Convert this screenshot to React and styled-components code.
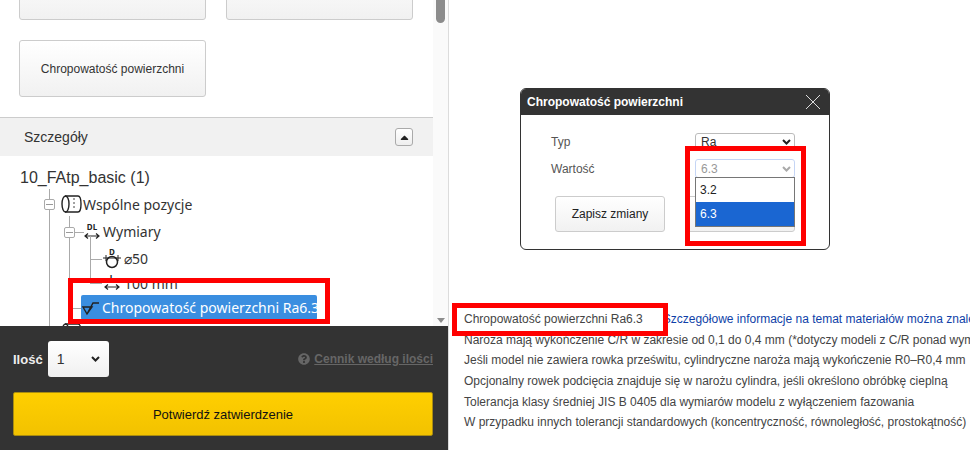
import React from "react";
import styled, { createGlobalStyle } from "styled-components";
import { FaQuestionCircle, FaCaretUp } from "react-icons/fa";

const GlobalStyle = createGlobalStyle`
  html, body {
    margin: 0;
    padding: 0;
    background: #fff;
    font-family: "Liberation Sans", Arial, sans-serif;
    color: #333;
  }
`;

const Page = styled.div`
  position: relative;
  display: flex;
  width: 970px;
  height: 450px;
  overflow: hidden;
`;

// Left column
const Side = styled.aside`
  display: flex;
  flex-direction: column;
  flex: none;
  width: 448px;
  height: 450px;
  border-right: 1px solid #dcdcdc;
`;

const SideScroll = styled.div`
  display: flex;
  flex: none;
  height: 326px;
  overflow: hidden;
`;

const SideBody = styled.div`
  flex: none;
  width: 433px;
`;

const Scrollbar = styled.div`
  display: flex;
  flex-direction: column;
  justify-content: space-between;
  align-items: center;
  flex: none;
  width: 15px;
  padding-bottom: 3px;
  box-sizing: border-box;
  background: #fafafa;
`;

const Thumb = styled.div`
  width: 9px;
  height: 23px;
  border-radius: 0 0 5px 5px;
  background: #8c8c8c;
`;

const ScrollArrow = styled.div`
  width: 0;
  height: 0;
  border-left: 4px solid transparent;
  border-right: 4px solid transparent;
  border-top: 5px solid #8c8c8c;
`;

const ButtonGrid = styled.div`
  display: grid;
  grid-template-columns: 187px 187px;
  grid-auto-rows: 57px;
  gap: 20px;
  margin-top: -37px;
  padding-left: 19px;
`;

const OptionButton = styled.div`
  display: flex;
  align-items: center;
  justify-content: center;
  box-sizing: border-box;
  border: 1px solid #ccc;
  border-radius: 3px;
  background: linear-gradient(#fff, #f1f1f1);
  font-size: 12px;
  color: #333;
`;

const DetailHeader = styled.div`
  display: flex;
  align-items: center;
  justify-content: space-between;
  box-sizing: border-box;
  height: 39px;
  margin-top: 20px;
  padding: 0 20px 0 24px;
  border-top: 1px solid #ccc;
  background: #f1f1f1;
  font-size: 14px;
  color: #333;
`;

const CollapseButton = styled.div`
  display: flex;
  align-items: center;
  justify-content: center;
  box-sizing: border-box;
  width: 18px;
  height: 18px;
  border: 1px solid #aaa;
  border-radius: 3px;
  background: linear-gradient(#fff, #eee);
  color: #222;
  font-size: 13px;
`;

const Tree = styled.div`
  position: relative;
  padding-top: 12px;
  font-family: "Noto Sans", sans-serif;
  font-size: 14px;
  color: #333;
`;

const TreeRoot = styled.div`
  height: 21px;
  padding-left: 20px;
  font-family: "Liberation Sans", Arial, sans-serif;
  font-size: 16px;
  line-height: 20px;
  color: #333;
`;

const Guide = styled.div`
  position: relative;
  padding-top: 3px;

  &::before {
    content: "";
    position: absolute;
    left: ${(p) => p.$x}px;
    top: ${(p) => p.$top}px;
    height: ${(p) => p.$len}px;
    width: 1px;
    background: #aaa;
  }
`;

const TreeRow = styled.div`
  position: relative;
  display: flex;
  align-items: center;
  gap: ${(p) => p.$gap ?? 1}px;
  height: 24.4px;
  padding-left: ${(p) => p.$indent}px;
  white-space: nowrap;

  &::before {
    content: "";
    display: ${(p) => (p.$stub ? "block" : "none")};
    position: absolute;
    left: ${(p) => p.$stubX}px;
    top: 50%;
    width: ${(p) => p.$stub}px;
    height: 1px;
    background: #aaa;
  }
`;

const Toggle = styled.span`
  position: absolute;
  left: ${(p) => p.$x}px;
  top: 50%;
  display: flex;
  align-items: center;
  justify-content: center;
  box-sizing: border-box;
  width: 11px;
  height: 11px;
  margin-top: -5px;
  border: 1px solid #aaa;
  border-radius: 2px;
  background: #fff;

  &::after {
    content: "";
    width: 7px;
    height: 1px;
    background: #999;
  }
`;

const SelectedLabel = styled.span`
  display: flex;
  align-items: center;
  gap: 3px;
  box-sizing: border-box;
  width: 236px;
  height: 25px;
  padding-left: 1px;
  border-radius: 2px;
  background: #3a8ee0;
  color: #fff;
  overflow: hidden;
`;

const IconSvg = styled.svg`
  display: block;
  flex: none;
  overflow: visible;

  text {
    font-family: "Noto Sans", sans-serif;
    font-weight: 700;
    font-size: 8px;
    fill: #222;
    text-anchor: middle;
  }
`;

const CylinderIcon = () => (
  <IconSvg width="21" height="18" viewBox="0 0 21 18">
    <path d="M4 1h13c2 0 3 4 3 8s-1 8-3 8H4" fill="none" stroke="#222" strokeWidth="1.4" />
    <ellipse cx="4.5" cy="9" rx="3.5" ry="8" fill="none" stroke="#222" strokeWidth="1.4" />
    <path d="M13 3v12" stroke="#444" strokeWidth="1" strokeDasharray="2 2" />
  </IconSvg>
);

const LengthIcon = ({ label, width = 16 }) => (
  <IconSvg width={width} height="20" viewBox={`0 0 ${width} 20`}>
    <text x={width / 2} y="8">{label}</text>
    <path
      d={`M1 14h${width - 2}M4 11.5L1 14l3 2.5M${width - 4} 11.5l3 2.5-3 2.5`}
      fill="none"
      stroke="#222"
      strokeWidth="1.2"
    />
  </IconSvg>
);

const DiameterIcon = () => (
  <IconSvg width="18" height="20" viewBox="0 0 18 20">
    <text x="9" y="6">D</text>
    <path d="M0 9h18M3 6v6M15 6v6" fill="none" stroke="#222" strokeWidth="1" />
    <circle cx="9" cy="13" r="5.5" fill="none" stroke="#222" strokeWidth="1.5" />
  </IconSvg>
);

const RoughnessIcon = () => (
  <IconSvg width="17" height="14" viewBox="0 0 17 14">
    <path d="M1 6h9L5 13 1 6zM5 13L11 2h6" fill="none" stroke="#222" strokeWidth="1.4" />
  </IconSvg>
);

// Bottom bar of the left column
const OrderBar = styled.div`
  flex: none;
  box-sizing: border-box;
  height: 124px;
  padding: 15px 15px 0 13px;
  background: #333;
`;

const QuantityRow = styled.div`
  display: flex;
  align-items: center;
  height: 36px;
`;

const QuantityLabel = styled.span`
  margin-right: 5px;
  font-size: 13px;
  font-weight: 700;
  color: #eee;
`;

const QuantitySelect = styled.div`
  display: flex;
  align-items: center;
  justify-content: space-between;
  box-sizing: border-box;
  width: 61px;
  height: 36px;
  padding: 0 9px;
  border-radius: 3px;
  background: linear-gradient(#fff, #f0f0f0);
  font-size: 14px;
  color: #333;
`;

const PriceLink = styled.a`
  display: flex;
  align-items: center;
  gap: 4px;
  margin-left: auto;
  font-size: 12px;
  font-weight: 700;
  color: #666;

  span {
    text-decoration: underline;
  }
`;

const ConfirmButton = styled.div`
  display: flex;
  align-items: center;
  justify-content: center;
  box-sizing: border-box;
  height: 44px;
  margin-top: 15px;
  border: 1px solid #a98c10;
  border-radius: 2px;
  background: linear-gradient(#ffcf00, #f2c200);
  font-size: 13px;
  color: #111;
`;

const Chevron = ({ color = "#222" }) => (
  <IconSvg width="9" height="6" viewBox="0 0 9 6">
    <path d="M1 1l3.5 3.5L8 1" fill="none" stroke={color} strokeWidth="2" />
  </IconSvg>
);

// Right column
const Main = styled.main`
  flex: 1;
  min-width: 0;
  box-sizing: border-box;
  padding: 309px 0 0 15px;
  overflow: hidden;
`;

const InfoLine = styled.div`
  display: flex;
  gap: 20px;
  height: 20.7px;
  font-size: 12px;
  line-height: 20.7px;
  color: #444;
  white-space: nowrap;
`;

const InfoLink = styled.a`
  color: #0f3fa8;
`;

// Dialog
const Dialog = styled.div`
  position: absolute;
  left: 520px;
  top: 88px;
  box-sizing: border-box;
  width: 310px;
  height: 162px;
  border: 1px solid #333;
  border-radius: 6px;
  background: #fff;
  overflow: hidden;
`;

const DialogTitle = styled.div`
  display: flex;
  align-items: center;
  justify-content: space-between;
  box-sizing: border-box;
  height: 26px;
  padding: 0 8px 0 6px;
  background: #333;
  font-size: 12px;
  font-weight: 700;
  color: #fff;
`;

const DialogBody = styled.div`
  display: grid;
  grid-template-columns: 144px 100px;
  grid-auto-rows: 27px;
  align-items: center;
  padding: 13px 0 0 30px;
  font-size: 12px;
  color: #555;
`;

const DialogSelect = styled.div`
  display: flex;
  align-items: center;
  justify-content: space-between;
  box-sizing: border-box;
  height: ${(p) => (p.$open ? 19 : 17)}px;
  padding: 0 3px 0 5px;
  border: 1px solid ${(p) => (p.$open ? "#c5d5f5" : "#bbb")};
  border-radius: 3px;
  font-size: 12px;
  color: ${(p) => (p.$open ? "#999" : "#333")};
`;

const DialogButtons = styled.div`
  display: flex;
  justify-content: space-between;
  margin: 14px 0 0 34px;
  width: 240px;
`;

const DialogButton = styled.div`
  display: flex;
  align-items: center;
  justify-content: center;
  box-sizing: border-box;
  width: 110px;
  height: 36px;
  border: 1px solid #ccc;
  border-radius: 3px;
  background: linear-gradient(#fff, #f1f1f1);
  font-size: 12px;
  color: #222;
`;

const DropdownList = styled.div`
  position: absolute;
  left: 695px;
  top: 177px;
  box-sizing: border-box;
  width: 100px;
  height: 50px;
  border: 1px solid #767676;
  background: #fff;
  font-size: 12px;
`;

const DropdownOption = styled.div`
  display: flex;
  align-items: center;
  height: 24px;
  padding-left: 4px;
  background: ${(p) => (p.$active ? "#1a66d2" : "#fff")};
  color: ${(p) => (p.$active ? "#fff" : "#222")};
`;

// Red annotation frames drawn over the screenshot
const Highlight = styled.div`
  position: absolute;
  left: ${(p) => p.$x}px;
  top: ${(p) => p.$y}px;
  box-sizing: border-box;
  width: ${(p) => p.$w}px;
  height: ${(p) => p.$h}px;
  border: 5px solid #f00;
  pointer-events: none;
`;

const notes = [
  "Naroża mają wykończenie C/R w zakresie od 0,1 do 0,4 mm (*dotyczy modeli z C/R ponad wymiarem)",
  "Jeśli model nie zawiera rowka prześwitu, cylindryczne naroża mają wykończenie R0–R0,4 mm",
  "Opcjonalny rowek podcięcia znajduje się w narożu cylindra, jeśli określono obróbkę cieplną",
  "Tolerancja klasy średniej JIS B 0405 dla wymiarów modelu z wyłączeniem fazowania",
  "W przypadku innych tolerancji standardowych (koncentryczność, równoległość, prostokątność)",
];

export default function App() {
  return (
    <Page>
      <GlobalStyle />
      <Side>
        <SideScroll>
          <SideBody>
            <ButtonGrid>
              <OptionButton />
              <OptionButton />
              <OptionButton>Chropowatość powierzchni</OptionButton>
            </ButtonGrid>
            <DetailHeader>
              Szczegóły
              <CollapseButton>
                <FaCaretUp />
              </CollapseButton>
            </DetailHeader>
            <Tree>
              <TreeRoot>10_FAtp_basic (1)</TreeRoot>
              <Guide $x={49} $top={0} $len={140}>
                <TreeRow $indent={61} $gap={1}>
                  <Toggle $x={44} />
                  <CylinderIcon />
                  Wspólne pozycje
                </TreeRow>
                <Guide $x={69} $top={0} $len={70}>
                  <TreeRow $indent={84} $gap={3} $stub={9} $stubX={75}>
                    <Toggle $x={64} />
                    <LengthIcon label="DL" />
                    Wymiary
                  </TreeRow>
                  <Guide $x={90} $top={-8} $len={45}>
                    <TreeRow $indent={103} $gap={3} $stub={12} $stubX={90}>
                      <DiameterIcon />
                      ⌀50
                    </TreeRow>
                    <TreeRow $indent={104} $gap={4} $stub={12} $stubX={90}>
                      <LengthIcon label="L" />
                      100 mm
                    </TreeRow>
                  </Guide>
                  <TreeRow $indent={81} $stub={12} $stubX={69}>
                    <SelectedLabel>
                      <RoughnessIcon />
                      Chropowatość powierzchni Ra6.3
                    </SelectedLabel>
                  </TreeRow>
                </Guide>
                <TreeRow $indent={61} $gap={1}>
                  <Toggle $x={44} />
                  <CylinderIcon />
                  Rowek
                </TreeRow>
              </Guide>
            </Tree>
          </SideBody>
          <Scrollbar>
            <Thumb />
            <ScrollArrow />
          </Scrollbar>
        </SideScroll>
        <OrderBar>
          <QuantityRow>
            <QuantityLabel>Ilość</QuantityLabel>
            <QuantitySelect>
              1
              <Chevron />
            </QuantitySelect>
            <PriceLink>
              <FaQuestionCircle size={12} />
              <span>Cennik według ilości</span>
            </PriceLink>
          </QuantityRow>
          <ConfirmButton>Potwierdź zatwierdzenie</ConfirmButton>
        </OrderBar>
      </Side>

      <Main>
        <InfoLine>
          <span>Chropowatość powierzchni Ra6.3</span>
          <InfoLink>Szczegółowe informacje na temat materiałów można znaleźć tutaj</InfoLink>
        </InfoLine>
        {notes.map((note) => (
          <InfoLine key={note}>{note}</InfoLine>
        ))}
      </Main>

      <Dialog>
        <DialogTitle>
          Chropowatość powierzchni
          <IconSvg width="16" height="16" viewBox="0 0 16 16">
            <path d="M1 1l14 14M15 1L1 15" stroke="#ddd" strokeWidth="1" />
          </IconSvg>
        </DialogTitle>
        <DialogBody>
          <span>Typ</span>
          <DialogSelect>
            Ra
            <Chevron />
          </DialogSelect>
          <span>Wartość</span>
          <DialogSelect $open>
            6.3
            <Chevron color="#aaa" />
          </DialogSelect>
        </DialogBody>
        <DialogButtons>
          <DialogButton>Zapisz zmiany</DialogButton>
          <DialogButton />
        </DialogButtons>
      </Dialog>

      <DropdownList>
        <DropdownOption>3.2</DropdownOption>
        <DropdownOption $active>6.3</DropdownOption>
      </DropdownList>

      <Highlight $x={68} $y={278} $w={262} $h={46} />
      <Highlight $x={685} $y={146} $w={121} $h={100} />
      <Highlight $x={452} $y={303} $w={216} $h={33} />
    </Page>
  );
}
